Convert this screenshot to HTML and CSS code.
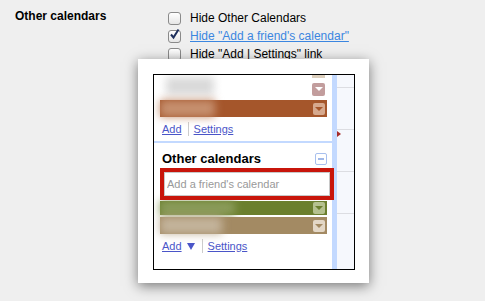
FILE: index.html
```html
<!DOCTYPE html>
<html lang="en">
<head>
    <meta charset="UTF-8">
    <title>Other calendars settings</title>
    <link rel="stylesheet" href="styles.css">
</head>
<body>
    <div class="settings">
        <div class="settings-label">Other calendars</div>
        <ul class="options">
            <li><span class="box"></span><span>Hide Other Calendars</span></li>
            <li>
                <span class="box">
                    <svg width="13" height="13" viewBox="0 0 13 13"><path d="M3 6.5 L5.5 9.5 L10.5 1.5" fill="none" stroke="#1d2f5c" stroke-width="2"/></svg>
                </span>
                <a href="#" class="opt-link">Hide "Add a friend's calendar"</a>
            </li>
            <li><span class="box"></span><span>Hide "Add | Settings" link</span></li>
        </ul>
    </div>

    <!-- preview screenshot floating over the settings -->
    <div class="preview">
        <div class="frame">
            <div class="sidebar">
                <div class="stub"></div>

                <div class="cal-row cal-mine">
                    <span class="smudge"></span>
                    <span class="menu menu-rose"></span>
                </div>
                <div class="cal-row cal-brown">
                    <span class="smudge"></span>
                    <span class="menu"></span>
                </div>
                <div class="links">
                    <a href="#">Add</a><span class="sep"></span><a href="#">Settings</a>
                </div>

                <div class="section-head">
                    <span>Other calendars</span>
                    <span class="collapse"></span>
                </div>
                <div class="friend">
                    <input type="text" placeholder="Add a friend's calendar">
                </div>
                <div class="cal-row cal-green">
                    <span class="smudge"></span>
                    <span class="menu"></span>
                </div>
                <div class="cal-row cal-tan">
                    <span class="smudge"></span>
                    <span class="menu"></span>
                </div>
                <div class="links">
                    <a href="#">Add</a><span class="arrow"></span><span class="sep"></span><a href="#">Settings</a>
                </div>
            </div>
            <div class="bar"></div>
            <div class="grid">
                <span class="now"></span>
            </div>
        </div>
    </div>
</body>
</html>
```

FILE: styles.css
```css
body {
    margin: 0;
    background-color: #efefef;
    font-family: 'Liberation Sans', Arial, sans-serif;
    color: #000;
}
.settings {
    display: flex;
    padding: 9px 0 0 15px;
}
.settings-label {
    width: 153px;
    font-weight: bold;
    font-size: 12px;
    line-height: 14px;
}
.options {
    list-style: none;
    margin: 0;
    padding: 0;
    font-size: 12px;
}
.options li {
    display: flex;
    align-items: center;
    gap: 9px;
    height: 18px;
}
.box {
    width: 11px;
    height: 11px;
    border: 1px solid #8a8a8a;
    border-radius: 3px;
    background: linear-gradient(#fff, #e6e6e6);
    position: relative;
}
.box svg {
    position: absolute;
    left: -1px;
    top: -3px;
}
.opt-link {
    color: #3b86e0;
}

/* floating preview */
.preview {
    position: absolute;
    left: 138px;
    top: 59px;
    width: 231px;
    height: 224px;
    box-sizing: border-box;
    padding: 15px 14px 13px 15px;
    background-color: white;
    box-shadow: 0 3px 12px rgba(0, 0, 0, 0.5);
}
.frame {
    display: flex;
    height: 196px;
    box-sizing: border-box;
    border: 1px solid #000;
    background-color: white;
    overflow: hidden;
}
.sidebar {
    width: 178px;
    font-size: 11px;
    position: relative;
}
.stub {
    width: 13px;
    height: 3px;
    margin: 0 7px 0 auto;
    background-color: #dccfbd;
}
.cal-row {
    position: relative;
    display: flex;
    align-items: center;
    justify-content: flex-end;
    margin: 2px 5px 0 6px;
    height: 17px;
    padding-right: 2px;
}
.cal-mine {
    margin-top: 2px;
    height: 18px;
}
.cal-brown { background-color: #a5562b; }
.cal-green { background-color: #6b7f2e; height: 14px; margin-top: 1px; }
.cal-tan { background-color: #a38a63; }
.smudge {
    position: absolute;
    left: 0;
    top: 0;
    height: 100%;
    width: 55px;
    filter: blur(4px);
}
.cal-mine .smudge { background-color: #d9d9d9; left: 6px; width: 48px; top: -3px; }
.cal-brown .smudge { background-color: #c6906f; }
.cal-green .smudge { background-color: #8c9d5c; width: 75px; }
.cal-tan .smudge { background-color: #c3b39b; width: 62px; }
.menu {
    position: relative;
    width: 12px;
    height: 12px;
    border-radius: 2px;
    display: flex;
    align-items: center;
    justify-content: center;
}
.menu::after {
    content: "";
    border-left: 4px solid transparent;
    border-right: 4px solid transparent;
    border-top: 4px solid;
}
.menu-rose { background-color: #c29d9d; color: #fff; width: 13px; height: 13px; }
.cal-brown .menu { background-color: #d6a98e; color: #a5562b; }
.cal-green .menu { background-color: #b5c18f; color: #6b7f2e; }
.cal-tan .menu { background-color: #e3d7c6; color: #a38a63; }
.links {
    display: flex;
    align-items: center;
    height: 24px;
    padding-left: 8px;
}
.links a {
    color: #4a55c8;
}
.sep {
    width: 1px;
    height: 14px;
    background-color: #cccccc;
    margin: 0 5px 0 6px;
}
.arrow {
    margin: 1px 1px 0 5px;
    border-left: 4px solid transparent;
    border-right: 4px solid transparent;
    border-top: 7px solid #4a55c8;
}
.section-head {
    display: flex;
    align-items: center;
    justify-content: space-between;
    border-top: 2px solid #c3d9ff;
    padding: 6px 5px 0 8px;
    height: 19px;
    font-size: 13px;
    font-weight: bold;
}
.collapse {
    width: 10px;
    height: 10px;
    border: 1px solid #a8c0ee;
    border-radius: 2px;
    display: flex;
    align-items: center;
    justify-content: center;
}
.collapse::after {
    content: "";
    width: 6px;
    height: 2px;
    background-color: #a0b8e8;
}
.friend {
    position: relative;
    z-index: 1;
    width: 166px;
    margin-left: 6px;
    border: 4px solid #c8150b;
}
.friend input {
    display: block;
    width: 100%;
    height: 24px;
    box-sizing: border-box;
    margin: 0;
    border: 1px solid #c8c8c8;
    padding: 0 2px;
    font-family: 'Liberation Sans', Arial, sans-serif;
    font-size: 11px;
}
.friend input::placeholder {
    color: #999;
}
.bar {
    width: 5px;
    background-color: #c3d9ff;
}
.grid {
    flex: 1;
    position: relative;
    background: repeating-linear-gradient(#f6f8fd 0, #f6f8fd 41px, #dcdde2 41px, #dcdde2 42px);
    background-position: 0 -29px;
}
.now {
    position: absolute;
    left: 0;
    top: 56px;
    border-left: 4px solid #a52a2a;
    border-top: 3px solid transparent;
    border-bottom: 3px solid transparent;
}
```
